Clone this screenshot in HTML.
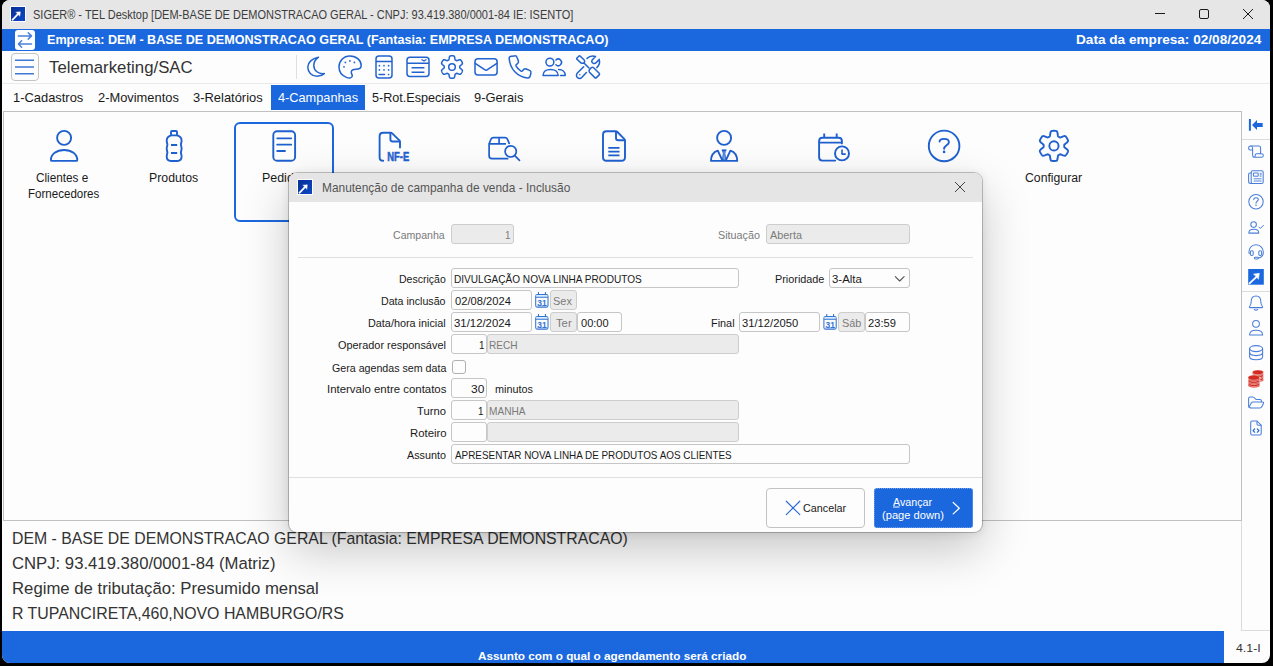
<!DOCTYPE html>
<html><head><meta charset="utf-8">
<style>
*{box-sizing:border-box;margin:0;padding:0}
html,body{width:1273px;height:666px;overflow:hidden;background:#000;font-family:"Liberation Sans",sans-serif;}
#frame{position:absolute;left:2px;top:0;width:1268px;height:663px;background:#fdfdfd;border-radius:8px;overflow:hidden}
#win{position:absolute;left:-2px;top:0;width:1273px;height:666px}
.abs{position:absolute}
.t{position:absolute;white-space:nowrap;line-height:1;transform-origin:0 0}
svg{position:absolute;overflow:visible}
#titlebar{left:0;top:0;width:1273px;height:29px;background:#e6e6e6}
#bluebar{left:0;top:29px;width:1273px;height:22px;background:#1b68de}
#sep1{left:0;top:83px;width:1273px;height:1px;background:#eaeaea}
#content{left:3px;top:111px;width:1239px;height:410px;border:1px solid #c0c0c0;background:#fdfdfd}
#sideline{left:1242px;top:139px;width:28px;height:1px;background:#dcdcdc}
#sideline2{left:1242px;top:630px;width:28px;height:1px;background:#dcdcdc}
#sidev{left:1241px;top:521px;width:1px;height:110px;background:#dcdcdc}
#status{left:0;top:631px;width:1224px;height:35px;background:#1b68de}
#tabsel{left:271px;top:85px;width:94px;height:25px;background:#1b68de}
#swapbox{left:15px;top:30px;width:20px;height:20px;background:#fff;border-radius:3px}
#hamb{left:11px;top:53px;width:28px;height:28px;border:1px solid #c4c4c4;border-radius:4px;background:#fdfdfd}
#tsep{left:296px;top:55px;width:1px;height:24px;background:#e0e0e0}
#selbox{left:234px;top:122px;width:100px;height:100px;border:2px solid #1b68de;border-radius:6px}
</style></head><body>
<div id="frame"><div id="win">
<div id="titlebar" class="abs"></div>
<div id="bluebar" class="abs"></div>
<div id="sep1" class="abs"></div>
<div id="content" class="abs"></div>
<div id="sideline" class="abs"></div><div id="sideline2" class="abs"></div><div id="sidev" class="abs"></div>
<div id="status" class="abs"></div>
<div id="tabsel" class="abs"></div>
<div id="swapbox" class="abs"></div>
<div id="hamb" class="abs"></div>
<div id="tsep" class="abs"></div>
<div id="selbox" class="abs"></div>
<span class="t" style="left:33.29px;top:9.42px;font-size:12.5px;color:#3c3c3c;transform:scaleX(0.8796)">SIGER® - TEL Desktop [DEM-BASE DE DEMONSTRACAO GERAL - CNPJ: 93.419.380/0001-84 IE: ISENTO]</span>
<span class="t" style="left:47.45px;top:33.44px;font-size:13.3px;color:#fff;transform:scaleX(0.9476);font-weight:700">Empresa: DEM - BASE DE DEMONSTRACAO GERAL (Fantasia: EMPRESA DEMONSTRACAO)</span>
<span class="t" style="left:1076.40px;top:33.44px;font-size:13.3px;color:#fff;transform:scaleX(1.0230);font-weight:700">Data da empresa: 02/08/2024</span>
<span class="t" style="left:48.96px;top:58.80px;font-size:16.3px;color:#333;transform:scaleX(1.0307)">Telemarketing/SAC</span>
<span class="t" style="left:12.57px;top:90.80px;font-size:13px;color:#1a1a1a;transform:scaleX(0.9923)">1-Cadastros</span>
<span class="t" style="left:98.13px;top:90.80px;font-size:13px;color:#1a1a1a;transform:scaleX(0.9900)">2-Movimentos</span>
<span class="t" style="left:192.93px;top:90.80px;font-size:13px;color:#1a1a1a;transform:scaleX(0.9943)">3-Relatórios</span>
<span class="t" style="left:278.02px;top:90.80px;font-size:13px;color:#fff;transform:scaleX(0.9802)">4-Campanhas</span>
<span class="t" style="left:371.77px;top:90.80px;font-size:13px;color:#1a1a1a;transform:scaleX(0.9697)">5-Rot.Especiais</span>
<span class="t" style="left:473.91px;top:90.80px;font-size:13px;color:#1a1a1a;transform:scaleX(0.9895)">9-Gerais</span>
<span class="t" style="left:35.75px;top:171.84px;font-size:12px;color:#1a1a1a;transform:scaleX(0.9796)">Clientes e</span>
<span class="t" style="left:28.24px;top:187.84px;font-size:12px;color:#1a1a1a;transform:scaleX(0.9628)">Fornecedores</span>
<span class="t" style="left:148.82px;top:171.84px;font-size:12px;color:#1a1a1a;transform:scaleX(1.0243)">Produtos</span>
<span class="t" style="left:262.21px;top:171.84px;font-size:12px;color:#1a1a1a;transform:scaleX(1.0360)">Pedidos</span>
<span class="t" style="left:1025.15px;top:171.84px;font-size:12px;color:#1a1a1a;transform:scaleX(1.0198)">Configurar</span>
<span class="t" style="left:11.85px;top:530.20px;font-size:16.3px;color:#333;transform:scaleX(0.9720)">DEM - BASE DE DEMONSTRACAO GERAL (Fantasia: EMPRESA DEMONSTRACAO)</span>
<span class="t" style="left:12.26px;top:555.20px;font-size:16.3px;color:#333;transform:scaleX(1.0253)">CNPJ: 93.419.380/0001-84 (Matriz)</span>
<span class="t" style="left:11.77px;top:580.20px;font-size:16.3px;color:#333;transform:scaleX(1.0274)">Regime de tributação: Presumido mensal</span>
<span class="t" style="left:11.85px;top:605.20px;font-size:16.3px;color:#333;transform:scaleX(0.9758)">R TUPANCIRETA,460,NOVO HAMBURGO/RS</span>
<span class="t" style="left:477.89px;top:650.52px;font-size:11.2px;color:#fff;transform:scaleX(1.0503);font-weight:700">Assunto com o qual o agendamento será criado</span>
<span class="t" style="left:1236.12px;top:642.69px;font-size:11px;color:#333;transform:scaleX(1.1209)">4.1-I</span>
<svg width="1273" height="666" viewBox="0 0 1273 666" style="left:0;top:0" fill="none" stroke-linecap="round" stroke-linejoin="round">
<defs><linearGradient id="ag" x1="0" y1="0" x2="1" y2="1"><stop offset="0" stop-color="#092f95"/><stop offset="1" stop-color="#0c49c6"/></linearGradient></defs><rect x="10" y="6" width="16" height="16" fill="#fff"/><rect x="11" y="7" width="14" height="14" fill="url(#ag)"/>
<path d="M12 20.3 L18.6 13.4" stroke="#fff" stroke-width="1.7" stroke-linecap="butt"/><path d="M16.2 12.2 L20.3 11.8 L19.9 15.9Z" fill="#fff" stroke="#fff" stroke-width="0.5"/>
<g stroke="#1a1a1a" stroke-width="1" stroke-linecap="butt"><path d="M1155 13.5 H1165"/><rect x="1199.5" y="9.5" width="9" height="9" rx="1.5"/><path d="M1243 9 L1253 19 M1253 9 L1243 19"/></g>
<g stroke="#4b80dc" stroke-width="1.5"><path d="M18.3 35.9 H31.3 M28.2 32.7 L31.5 35.9 L28.2 39.1"/><path d="M31.5 44 H18.6 M21.6 40.8 L18.4 44 L21.6 47.2"/></g>
<g stroke="#3f79d8" stroke-width="1.5" stroke-linecap="butt"><path d="M15 60.3 H34 M15 67 H34 M15 73.8 H34"/></g>
<g stroke="#2263cf" stroke-width="1.5">
<path d="M318.5 57.2 C312 58.5 307.8 62.5 307.8 67 C307.8 72.5 312 76.3 317 76.3 C320 76.3 322.8 75 324.3 73.6 C318.5 74.5 313.8 70.5 313.8 65.5 C313.8 62 316 59 318.5 57.2Z"/>
<path d="M350 56 C343.5 56 339 61 339 67 C339 72 342.5 76 347 77.6 C349.5 78.5 352 78 352.3 76 C352.5 74.5 351 73.5 351.3 71.8 C351.6 70 353.5 69.3 356 69.3 C359 69.3 361.2 68.5 361.2 65.5 C361.2 60.5 356.5 56 350 56Z"/>
<circle cx="344" cy="66.8" r="0.9" fill="#2263cf" stroke="none"/>
<circle cx="345.4" cy="62.4" r="0.9" fill="#2263cf" stroke="none"/>
<circle cx="349.9" cy="60.9" r="0.9" fill="#2263cf" stroke="none"/>
<circle cx="354.4" cy="62.4" r="0.9" fill="#2263cf" stroke="none"/>
<rect x="376" y="56" width="16" height="22" rx="3"/><path d="M376 61.5 H392" stroke-linecap="butt"/>
<circle cx="379.4" cy="65.7" r="0.85" fill="#2263cf" stroke="none"/>
<circle cx="384" cy="65.7" r="0.85" fill="#2263cf" stroke="none"/>
<circle cx="388.6" cy="65.7" r="0.85" fill="#2263cf" stroke="none"/>
<circle cx="379.4" cy="69.9" r="0.85" fill="#2263cf" stroke="none"/>
<circle cx="384" cy="69.9" r="0.85" fill="#2263cf" stroke="none"/>
<circle cx="388.6" cy="69.9" r="0.85" fill="#2263cf" stroke="none"/>
<path d="M379 74.5 H384.6" stroke-width="1.3"/><circle cx="388.6" cy="74.5" r="0.85" fill="#2263cf" stroke="none"/>
<rect x="407" y="57.3" width="22" height="19.1" rx="3"/><path d="M407 63.2 H429 M411.6 67.8 H424.4 M411.6 72.3 H424.4" stroke-linecap="butt"/><path d="M422 59.7 L424 61 L426 59.7" stroke-width="1.2"/>
<path d="M459.80 67.00 L459.80 66.73 L459.78 66.46 L459.79 66.18 L460.01 65.87 L460.43 65.51 L460.97 65.09 L461.54 64.62 L462.04 64.12 L462.38 63.63 L462.49 63.18 L462.38 62.80 L462.23 62.44 L462.07 62.09 L461.89 61.74 L461.70 61.40 L461.50 61.06 L461.29 60.74 L461.06 60.42 L460.83 60.10 L460.55 59.82 L460.11 59.70 L459.51 59.74 L458.83 59.93 L458.13 60.19 L457.50 60.45 L456.98 60.63 L456.60 60.66 L456.36 60.53 L456.13 60.39 L455.90 60.25 L455.66 60.11 L455.42 59.99 L455.19 59.84 L455.03 59.50 L454.93 58.96 L454.83 58.28 L454.71 57.55 L454.53 56.87 L454.27 56.32 L453.94 56.00 L453.56 55.91 L453.17 55.86 L452.78 55.83 L452.39 55.81 L452.00 55.80 L451.61 55.81 L451.22 55.83 L450.83 55.86 L450.44 55.91 L450.06 56.00 L449.73 56.32 L449.47 56.87 L449.29 57.55 L449.17 58.28 L449.07 58.96 L448.97 59.50 L448.81 59.84 L448.58 59.99 L448.34 60.11 L448.10 60.25 L447.87 60.39 L447.64 60.53 L447.40 60.66 L447.02 60.63 L446.50 60.45 L445.87 60.19 L445.17 59.93 L444.49 59.74 L443.89 59.70 L443.45 59.82 L443.17 60.10 L442.94 60.42 L442.71 60.74 L442.50 61.06 L442.30 61.40 L442.11 61.74 L441.93 62.09 L441.77 62.44 L441.62 62.80 L441.51 63.18 L441.62 63.63 L441.96 64.12 L442.46 64.62 L443.03 65.09 L443.57 65.51 L443.99 65.87 L444.21 66.18 L444.22 66.46 L444.20 66.73 L444.20 67.00 L444.20 67.27 L444.22 67.54 L444.21 67.82 L443.99 68.13 L443.57 68.49 L443.03 68.91 L442.46 69.38 L441.96 69.88 L441.62 70.37 L441.51 70.82 L441.62 71.20 L441.77 71.56 L441.93 71.91 L442.11 72.26 L442.30 72.60 L442.50 72.94 L442.71 73.26 L442.94 73.58 L443.17 73.90 L443.45 74.18 L443.89 74.30 L444.49 74.26 L445.17 74.07 L445.87 73.81 L446.50 73.55 L447.02 73.37 L447.40 73.34 L447.64 73.47 L447.87 73.61 L448.10 73.75 L448.34 73.89 L448.58 74.01 L448.81 74.16 L448.97 74.50 L449.07 75.04 L449.17 75.72 L449.29 76.45 L449.47 77.13 L449.73 77.68 L450.06 78.00 L450.44 78.09 L450.83 78.14 L451.22 78.17 L451.61 78.19 L452.00 78.20 L452.39 78.19 L452.78 78.17 L453.17 78.14 L453.56 78.09 L453.94 78.00 L454.27 77.68 L454.53 77.13 L454.71 76.45 L454.83 75.72 L454.93 75.04 L455.03 74.50 L455.19 74.16 L455.42 74.01 L455.66 73.89 L455.90 73.75 L456.13 73.61 L456.36 73.47 L456.60 73.34 L456.98 73.37 L457.50 73.55 L458.13 73.81 L458.83 74.07 L459.51 74.26 L460.11 74.30 L460.55 74.18 L460.83 73.90 L461.06 73.58 L461.29 73.26 L461.50 72.94 L461.70 72.60 L461.89 72.26 L462.07 71.91 L462.23 71.56 L462.38 71.20 L462.49 70.82 L462.38 70.37 L462.04 69.88 L461.54 69.38 L460.97 68.91 L460.43 68.49 L460.01 68.13 L459.79 67.82 L459.78 67.54 L459.80 67.27Z"/><circle cx="452" cy="67" r="3.3"/>
<rect x="475" y="58.8" width="22.1" height="16.2" rx="3"/><path d="M475.2 63.3 L485 69.9 Q486 70.6 487 69.9 L496.9 63.3"/>
<path d="M509.2 58.5 C509 57 510 56.5 511.5 56.3 L514.5 55.9 C516 55.7 516.8 56.5 517.2 57.8 L518.4 61 C518.8 62.2 518.3 63 517.5 63.7 L516.3 64.6 C515.8 65 515.8 65.6 516.1 66.2 C517.2 68.2 519 70 521 71.1 C521.6 71.4 522.2 71.3 522.6 70.8 L523.6 69.6 C524.3 68.8 525.2 68.6 526.2 69 L529.6 70.4 C530.8 70.9 531.2 71.8 530.9 73 L530.2 76 C529.8 77.5 528.8 78.1 527.3 77.9 C517.5 76.8 509.9 69 509.2 58.5Z"/>
<circle cx="549.9" cy="62.1" r="3.95"/><path d="M543 75.5 C543 71.5 546.5 69.4 550.5 69.4 C554.5 69.4 558.2 71.5 558.2 75.5Z"/>
<path d="M555.9 60 A3.3 3.3 0 1 1 555.9 64.8"/><path d="M558.6 69.5 C562.5 69.5 565.2 71.8 565.2 75.5 H560.5"/>
<path d="M577 58 L578.8 56.2 Q579.5 55.5 580.3 56.2 L584 59.8 Q584.6 60.4 584.6 61.2 L584.3 63.2 L582 63.2 Q581.2 63.2 580.6 62.6 L577 59.3 Q576.3 58.7 577 58Z"/>
<path d="M584 63 L589 68"/>
<path d="M589.3 70 Q588.6 71.2 589.5 72.2 L594.8 77.6 Q595.6 78.4 596.4 77.6 L599.2 74.9 Q600 74.1 599.2 73.3 L593.6 67.8 Q592.6 66.9 591.4 67.6Z"/>
<path d="M583.7 66.7 L577.6 72.8 C576 74.5 576.2 76.5 577.5 77.6 C578.8 78.7 580.8 78.5 582 77.2 L586.4 72.5"/>
<circle cx="579.8" cy="74.8" r="0.7" fill="#2263cf" stroke="none"/>
<path d="M587 58.4 C589 56.5 592.5 55.6 595.5 56.5 L592.2 60 C591.3 61.2 591.8 62.6 593 63.2 C594.3 63.8 595.5 63.3 596.3 62.4 L599.2 59.4 C600 62.3 599.2 65.5 596.8 67.6"/>
</g>
<g stroke="#1f60cf" stroke-width="1.9">
<circle cx="64.1" cy="137.9" r="7"/><path d="M51.8 160.9 Q50.9 160.9 50.9 160 C51 154 56.5 150 64.1 150 C71.7 150 77.2 154 77.3 160 Q77.3 160.9 76.4 160.9Z"/>
<path d="M171 135.3 V132 Q171 131 172 131 H176 Q177 131 177 132 V135.3"/>
<path d="M171 135.4 C168.5 136.2 166.7 138 166.7 140.6 C166.7 142.6 167.4 143.4 167.4 144.6 C167.4 145.8 166.7 146.6 166.7 148.6 C166.7 150.6 167.4 151.4 167.4 152.6 C167.4 153.8 166.7 154.6 166.7 156.6 C166.7 159.5 168.5 161 171 161 H177.3 C179.8 161 181.6 159.5 181.6 156.6 C181.6 154.6 180.9 153.8 180.9 152.6 C180.9 151.4 181.6 150.6 181.6 148.6 C181.6 146.6 180.9 145.8 180.9 144.6 C180.9 143.4 181.6 142.6 181.6 140.6 C181.6 138 179.8 136.2 177.3 135.4Z"/>
<path d="M171 145 H177.2 M171 153 H177.2" stroke-linecap="butt" stroke-width="2"/>
<rect x="273.3" y="131.2" width="21.8" height="29.5" rx="3.8"/><path d="M277.2 138.3 H291.2 M277.2 144.7 H291.2 M277.2 151 H285" stroke-width="1.8"/>
<path d="M383.2 160.8 Q379.6 160.8 379.6 157.2 V136.2 Q379.6 132.7 383.2 132.7 H390.5 Q391.5 132.7 392.2 133.4 L399.4 140.4 Q400 141 400 142 V147.6"/><path d="M390.4 133.2 V139.3 Q390.4 141.5 392.6 141.5 H399.6"/>
<text x="387.2" y="161.4" font-family="Liberation Sans" font-weight="700" font-size="12.3" fill="#1f60cf" stroke="#1f60cf" stroke-width="0.5" textLength="22" lengthAdjust="spacingAndGlyphs">NF-E</text>
</g>
<g stroke="#1f60cf" stroke-width="1.7">
<path d="M507.6 158.7 H492 Q489.1 158.7 489.1 155.8 V143.8 L490.9 139.3 Q491.6 137.7 493.4 137.7 H505 Q506.8 137.7 507.5 139.3 L509.2 143.3"/><path d="M489.3 143.8 H506 M499.1 137.8 V143.6" stroke-linecap="butt"/>
<circle cx="510.7" cy="151.4" r="5.6"/><path d="M514.8 155.6 L519.5 160.3"/>
</g>
<g stroke="#1f60cf" stroke-width="1.9">
<path d="M606.5 131.2 H615.5 Q616.6 131.2 617.4 132 L624.2 138.8 Q625 139.6 625 140.7 V157.2 Q625 160.7 621.5 160.7 H606.5 Q603 160.7 603 157.2 V134.7 Q603 131.2 606.5 131.2Z"/><path d="M616 131.6 V138 Q616 140.3 618.3 140.3 H624.6"/><path d="M608.3 147.8 H619.5 M608.3 151.6 H619.5 M608.3 155.4 H619.5" stroke-width="1.7" stroke-linecap="butt"/>
<circle cx="724.1" cy="137.9" r="7"/>
<path d="M711 160.9 C711 155.5 713.5 152 717.8 150.6 L722.6 160.9Z M737.2 160.9 C737.2 155.5 734.7 152 730.4 150.6 L725.6 160.9Z M711 160.9 H737.2"/>
<path d="M721.8 150.2 H726.4" stroke-width="1.6" stroke-linecap="butt"/><path d="M722.9 151.2 L725.3 151.2 L724.9 153.6 L725.6 158.8 L724.1 160.2 L722.6 158.8 L723.3 153.6Z" fill="#1f60cf" fill-opacity="0.55" stroke-width="0.9"/>
<path d="M835.2 160.6 H822.4 Q819.1 160.6 819.1 157.3 V141.1 Q819.1 137.8 822.4 137.8 H838.6 Q841.9 137.8 841.9 141.1 V143.4"/><path d="M819.3 142.6 H841.7 M824.2 133.6 V137.2 M836.7 133.6 V137.2" stroke-linecap="butt"/>
<circle cx="842" cy="153.4" r="7"/><path d="M842 150 V154.1 H845.2" stroke-width="1.6"/>
<circle cx="944.1" cy="145.9" r="15.3"/><path d="M939.6 141.5 C939.6 139.6 941.5 138.9 944.1 138.9 C947 138.9 948.9 140.3 948.9 142.2 C948.9 145.2 944.1 145.5 944.1 148.8"/>
<circle cx="944.1" cy="151.9" r="1.3" fill="#1f60cf" stroke="none"/>
<path d="M1064.25 145.90 L1064.24 145.54 L1064.22 145.18 L1064.24 144.82 L1064.55 144.41 L1065.14 143.93 L1065.91 143.36 L1066.73 142.71 L1067.44 142.03 L1067.93 141.36 L1068.10 140.75 L1067.95 140.24 L1067.74 139.76 L1067.52 139.28 L1067.28 138.81 L1067.03 138.35 L1066.76 137.90 L1066.47 137.46 L1066.17 137.02 L1065.85 136.60 L1065.48 136.22 L1064.87 136.07 L1064.04 136.15 L1063.10 136.43 L1062.13 136.81 L1061.26 137.19 L1060.54 137.46 L1060.03 137.53 L1059.71 137.36 L1059.41 137.17 L1059.10 136.98 L1058.79 136.81 L1058.47 136.64 L1058.16 136.45 L1057.96 135.97 L1057.84 135.22 L1057.73 134.27 L1057.58 133.24 L1057.34 132.28 L1057.01 131.53 L1056.56 131.07 L1056.05 130.95 L1055.53 130.88 L1055.00 130.84 L1054.48 130.81 L1053.95 130.80 L1053.42 130.81 L1052.90 130.84 L1052.37 130.88 L1051.85 130.95 L1051.34 131.07 L1050.89 131.53 L1050.56 132.28 L1050.32 133.24 L1050.17 134.27 L1050.06 135.22 L1049.94 135.97 L1049.74 136.45 L1049.43 136.64 L1049.11 136.81 L1048.80 136.98 L1048.49 137.17 L1048.19 137.36 L1047.87 137.53 L1047.36 137.46 L1046.64 137.19 L1045.77 136.81 L1044.80 136.43 L1043.86 136.15 L1043.03 136.07 L1042.42 136.22 L1042.05 136.60 L1041.73 137.02 L1041.43 137.46 L1041.14 137.90 L1040.87 138.35 L1040.62 138.81 L1040.38 139.28 L1040.16 139.76 L1039.95 140.24 L1039.80 140.75 L1039.97 141.36 L1040.46 142.03 L1041.17 142.71 L1041.99 143.36 L1042.76 143.93 L1043.35 144.41 L1043.66 144.82 L1043.68 145.18 L1043.66 145.54 L1043.65 145.90 L1043.66 146.26 L1043.68 146.62 L1043.66 146.98 L1043.35 147.39 L1042.76 147.87 L1041.99 148.44 L1041.17 149.09 L1040.46 149.77 L1039.97 150.44 L1039.80 151.05 L1039.95 151.56 L1040.16 152.04 L1040.38 152.52 L1040.62 152.99 L1040.87 153.45 L1041.14 153.90 L1041.43 154.34 L1041.73 154.78 L1042.05 155.20 L1042.42 155.58 L1043.03 155.73 L1043.86 155.65 L1044.80 155.37 L1045.77 154.99 L1046.64 154.61 L1047.36 154.34 L1047.87 154.27 L1048.19 154.44 L1048.49 154.63 L1048.80 154.82 L1049.11 154.99 L1049.43 155.16 L1049.74 155.35 L1049.94 155.83 L1050.06 156.58 L1050.17 157.53 L1050.32 158.56 L1050.56 159.52 L1050.89 160.27 L1051.34 160.73 L1051.85 160.85 L1052.37 160.92 L1052.90 160.96 L1053.42 160.99 L1053.95 161.00 L1054.48 160.99 L1055.00 160.96 L1055.53 160.92 L1056.05 160.85 L1056.56 160.73 L1057.01 160.27 L1057.34 159.52 L1057.58 158.56 L1057.73 157.53 L1057.84 156.58 L1057.96 155.83 L1058.16 155.35 L1058.47 155.16 L1058.79 154.99 L1059.10 154.82 L1059.41 154.63 L1059.71 154.44 L1060.03 154.27 L1060.54 154.34 L1061.26 154.61 L1062.13 154.99 L1063.10 155.37 L1064.04 155.65 L1064.87 155.73 L1065.48 155.58 L1065.85 155.20 L1066.17 154.78 L1066.47 154.34 L1066.76 153.90 L1067.03 153.45 L1067.28 152.99 L1067.52 152.52 L1067.74 152.04 L1067.95 151.56 L1068.10 151.05 L1067.93 150.44 L1067.44 149.77 L1066.73 149.09 L1065.91 148.44 L1065.14 147.87 L1064.55 147.39 L1064.24 146.98 L1064.22 146.62 L1064.24 146.26Z"/><circle cx="1053.95" cy="145.9" r="4.6"/>
</g>
</svg>
<div class="abs" style="left:1242px;top:291px;width:28px;height:1px;background:#dcdcdc"></div>
<svg width="1273" height="666" viewBox="0 0 1273 666" style="left:0;top:0" fill="none" stroke-linecap="round" stroke-linejoin="round">
<path d="M1249.9 119 V130.8" stroke="#1b68de" stroke-width="2" stroke-linecap="butt"/><path d="M1252 125 L1257 120 V123 H1262.7 V127 H1257 V130Z" fill="#1b68de"/>
<g stroke="#4a7ed8" stroke-width="1.05">
<path d="M1252.6 150 H1250.3 Q1248.6 150 1248.6 148 Q1248.6 146 1250.6 146 H1258.6 Q1260.6 146 1260.6 148 V153.6"/>
<path d="M1250.8 146 Q1252.6 146.3 1252.6 148.5 V155.2 Q1252.6 157.2 1254.4 157.2 H1261.5 Q1263.3 157.2 1263.3 155.5 Q1263.3 153.8 1261.5 153.8 H1256.7 Q1255.2 153.8 1255.2 155.5 Q1255.2 157.2 1253.8 157.2"/>
<rect x="1251.2" y="170.8" width="12" height="12.6" rx="1.5"/><path d="M1251.2 173 H1250 Q1248.6 173 1248.6 174.4 V181.4 Q1248.6 183.4 1250.6 183.4 H1253"/>
<rect x="1253.8" y="173" width="4.4" height="3.2" stroke-width="1"/><path d="M1259.8 173.3 H1261.6 M1259.8 174.8 H1261.6 M1259.8 176.2 H1261.6 M1253.6 178.8 H1261.6 M1253.6 181 H1261.6" stroke-width="0.9" stroke-linecap="butt"/>
<circle cx="1256" cy="201.7" r="7.2"/><path d="M1253.8 199.6 C1253.8 198.4 1254.8 197.8 1256 197.8 C1257.4 197.8 1258.3 198.5 1258.3 199.6 C1258.3 201.2 1256 201.3 1256 203.2"/>
<circle cx="1256" cy="205.2" r="0.8" fill="#4a7ed8" stroke="none"/>
<circle cx="1253.6" cy="224.6" r="2.8"/><path d="M1248.8 233.1 C1248.8 230.5 1250.8 229.3 1253.8 229.3 C1256.8 229.3 1258.8 230.5 1258.8 233.1Z"/><path d="M1259 227.2 L1260.3 228.3 L1263.4 225.6" stroke-width="1"/>
<path d="M1249.2 253.6 C1248.2 248.5 1251.5 244.8 1256 244.8 C1260.5 244.8 1264 248.5 1263.2 253.6 C1262.8 256 1261 257.6 1258.6 258"/>
<rect x="1250.4" y="250.8" width="2.8" height="4.6" rx="1.2"/><rect x="1258.8" y="250.8" width="2.8" height="4.6" rx="1.2"/><rect x="1254.4" y="257.2" width="4" height="1.7" rx="0.85"/>
</g>
<rect x="1248.2" y="269" width="15.6" height="15.7" fill="#1b68de"/><path d="M1249 283.8 L1257 276.4" stroke="#fff" stroke-width="1.8" stroke-linecap="butt"/><path d="M1253.8 274 L1259.4 273.3 L1258.5 279Z" fill="#fff" stroke="#fff" stroke-width="0.5"/>
<g stroke="#4a7ed8" stroke-width="1.05">
<path d="M1249.8 307.6 C1249.3 307.6 1249.2 307 1249.6 306.5 C1250.8 305 1251.2 303.8 1251.2 301.4 C1251.2 298 1253 295.9 1256 295.9 C1259 295.9 1260.8 298 1260.8 301.4 C1260.8 303.8 1261.2 305 1262.4 306.5 C1262.8 307 1262.7 307.6 1262.2 307.6Z"/><path d="M1254.3 309.4 Q1256 311.2 1257.7 309.4"/>
<circle cx="1256" cy="323.8" r="3.4"/><path d="M1249.6 335 C1249.6 331.8 1252.2 330.3 1256 330.3 C1259.8 330.3 1262.6 331.8 1262.6 335Z"/>
<ellipse cx="1256.1" cy="348.6" rx="6.5" ry="3"/><path d="M1249.6 348.6 V356.8 C1249.6 358.6 1252.5 359.8 1256.1 359.8 C1259.7 359.8 1262.6 358.6 1262.6 356.8 V348.6"/><path d="M1249.6 352.6 C1249.6 354.4 1252.5 355.6 1256.1 355.6 C1259.7 355.6 1262.6 354.4 1262.6 352.6"/>
</g>
<ellipse cx="1258" cy="379.9" rx="5.6" ry="2.4" fill="#d3291f" stroke="#fdfdfd" stroke-width="0.45"/><ellipse cx="1258" cy="378.7" rx="5.6" ry="2.4" fill="#d3291f" stroke="#fdfdfd" stroke-width="0.45"/><ellipse cx="1258" cy="376.7" rx="5.6" ry="2.4" fill="#d3291f" stroke="#fdfdfd" stroke-width="0.45"/><ellipse cx="1258" cy="375.5" rx="5.6" ry="2.4" fill="#d3291f" stroke="#fdfdfd" stroke-width="0.45"/><ellipse cx="1258" cy="373.5" rx="5.6" ry="2.4" fill="#d3291f" stroke="#fdfdfd" stroke-width="0.45"/><ellipse cx="1258" cy="372.3" rx="5.6" ry="2.4" fill="#d3291f" stroke="#fdfdfd" stroke-width="0.45"/>
<ellipse cx="1254" cy="385.2" rx="6" ry="2.6" fill="#d3291f" stroke="#fdfdfd" stroke-width="0.45"/><ellipse cx="1254" cy="384.0" rx="6" ry="2.6" fill="#d3291f" stroke="#fdfdfd" stroke-width="0.45"/><ellipse cx="1254" cy="382.0" rx="6" ry="2.6" fill="#d3291f" stroke="#fdfdfd" stroke-width="0.45"/><ellipse cx="1254" cy="380.8" rx="6" ry="2.6" fill="#d3291f" stroke="#fdfdfd" stroke-width="0.45"/><ellipse cx="1254" cy="378.8" rx="6" ry="2.6" fill="#d3291f" stroke="#fdfdfd" stroke-width="0.45"/><ellipse cx="1254" cy="377.6" rx="6" ry="2.6" fill="#d3291f" stroke="#fdfdfd" stroke-width="0.45"/>
<g stroke="#4a7ed8" stroke-width="1.05">
<path d="M1250.4 407.8 Q1248.6 407.8 1248.6 406 V398.6 Q1248.6 396.9 1250.3 396.9 H1252.6 Q1253.4 396.9 1254 397.5 L1255.3 398.8 Q1255.9 399.4 1256.7 399.4 H1259.8 Q1261.5 399.4 1261.5 401.1 V401.8"/>
<path d="M1249 407 L1251.3 402.9 Q1251.9 401.9 1253.1 401.9 H1262.2 Q1264.2 401.9 1263.3 403.7 L1261.8 406.7 Q1261.2 407.9 1259.9 407.9 H1250.4"/>
<path d="M1252.2 421 H1257 L1261.2 425.2 V433.4 Q1261.2 434.9 1259.7 434.9 H1252.2 Q1250.7 434.9 1250.7 433.4 V422.5 Q1250.7 421 1252.2 421Z"/><path d="M1257 421.2 V424 Q1257 425.2 1258.2 425.2 H1261"/><path d="M1254.6 429 L1253.1 430.6 L1254.6 432.2 M1257.4 429 L1258.9 430.6 L1257.4 432.2" stroke-width="1.25" stroke="#2f6cd0"/>
</g></svg>
<style>
#dlg{left:289px;top:173px;width:693px;height:359px;background:#fdfdfd;border-radius:8px;box-shadow:0 0 0 1px rgba(0,0,0,.22),0 18px 48px rgba(0,0,0,.22),0 1px 10px rgba(0,0,0,.10)}
#dclip{position:absolute;left:0;top:0;width:693px;height:359px;border-radius:8px;overflow:hidden}
#din{position:absolute;left:-289px;top:-173px;width:1273px;height:666px}
#dtitle{left:289px;top:173px;width:693px;height:29px;background:#e5e5e5}
.f{position:absolute;border:1px solid #c6c6c6;border-radius:3px;background:#fdfdfd}
.g{background:#ebebeb;border-color:#cdcdcd}
.hl{position:absolute;height:1px;background:#e0e0e0}
</style>
<div id="dlg" class="abs"><div id="dclip"><div id="din">
<div id="dtitle" class="abs"></div>
<div class="hl" style="left:298px;top:257px;width:675px"></div>
<div class="hl" style="left:289px;top:477px;width:693px"></div>
<div class="f g" style="left:451px;top:224px;width:63px;height:20px"></div>
<div class="f g" style="left:766px;top:224px;width:144px;height:20px"></div>
<div class="f" style="left:451px;top:268px;width:288px;height:20px"></div>
<div class="f" style="left:829px;top:268px;width:81px;height:20px"></div>
<div class="f" style="left:451px;top:290px;width:81px;height:20px"></div>
<div class="f g" style="left:550px;top:290px;width:27px;height:20px"></div>
<div class="f" style="left:451px;top:312px;width:81px;height:20px"></div>
<div class="f g" style="left:550px;top:312px;width:27px;height:20px"></div>
<div class="f" style="left:577px;top:312px;width:45px;height:20px"></div>
<div class="f" style="left:739px;top:312px;width:81px;height:20px"></div>
<div class="f g" style="left:838px;top:312px;width:27px;height:20px"></div>
<div class="f" style="left:865px;top:312px;width:45px;height:20px"></div>
<div class="f" style="left:451px;top:334px;width:36px;height:20px"></div>
<div class="f g" style="left:487px;top:334px;width:252px;height:20px"></div>
<div class="f" style="left:452px;top:360px;width:14px;height:14px;border-color:#b0b0b0"></div>
<div class="f" style="left:451px;top:378px;width:36px;height:20px"></div>
<div class="f" style="left:451px;top:400px;width:36px;height:20px"></div>
<div class="f g" style="left:487px;top:400px;width:252px;height:20px"></div>
<div class="f" style="left:451px;top:422px;width:36px;height:20px"></div>
<div class="f g" style="left:487px;top:422px;width:252px;height:20px"></div>
<div class="f" style="left:451px;top:444px;width:459px;height:20px"></div>
<div class="f" style="left:766px;top:488px;width:99px;height:40px;border-color:#c2c2c2;border-radius:4px"></div>
<div class="f" style="left:874px;top:488px;width:99px;height:40px;background:#1b68de;border:1px dotted rgba(255,255,255,.4);border-radius:3px"></div>
<span class="t" style="left:321.59px;top:182.23px;font-size:12.6px;color:#555;transform:scaleX(0.9458)">Manutenção de campanha de venda - Inclusão</span>
<span class="t" style="left:393.29px;top:229.72px;font-size:11.2px;color:#7a7a7a;transform:scaleX(0.9457)">Campanha</span>
<span class="t" style="left:505.06px;top:229.72px;font-size:11.2px;color:#7a7a7a;transform:scaleX(0.8808)">1</span>
<span class="t" style="left:718.27px;top:229.72px;font-size:11.2px;color:#7a7a7a;transform:scaleX(0.9633)">Situação</span>
<span class="t" style="left:769.75px;top:229.72px;font-size:11.2px;color:#7a7a7a;transform:scaleX(0.9702)">Aberta</span>
<span class="t" style="left:399.45px;top:273.92px;font-size:11.2px;color:#1a1a1a;transform:scaleX(0.9407)">Descrição</span>
<span class="t" style="left:454.46px;top:273.92px;font-size:11.2px;color:#1a1a1a;transform:scaleX(0.9005)">DIVULGAÇÃO NOVA LINHA PRODUTOS</span>
<span class="t" style="left:774.53px;top:273.92px;font-size:11.2px;color:#1a1a1a;transform:scaleX(0.9687)">Prioridade</span>
<span class="t" style="left:832.27px;top:273.92px;font-size:11.2px;color:#1a1a1a;transform:scaleX(1.0186)">3-Alta</span>
<span class="t" style="left:380.65px;top:295.92px;font-size:11.2px;color:#1a1a1a;transform:scaleX(0.9522)">Data inclusão</span>
<span class="t" style="left:454.84px;top:295.92px;font-size:11.2px;color:#1a1a1a;transform:scaleX(0.9984)">02/08/2024</span>
<span class="t" style="left:553.29px;top:295.92px;font-size:11.2px;color:#7a7a7a;transform:scaleX(0.9808)">Sex</span>
<span class="t" style="left:367.64px;top:317.92px;font-size:11.2px;color:#1a1a1a;transform:scaleX(0.9684)">Data/hora inicial</span>
<span class="t" style="left:454.29px;top:317.92px;font-size:11.2px;color:#1a1a1a;transform:scaleX(1.0162)">31/12/2024</span>
<span class="t" style="left:556.11px;top:317.92px;font-size:11.2px;color:#7a7a7a;transform:scaleX(1.0054)">Ter</span>
<span class="t" style="left:580.64px;top:317.92px;font-size:11.2px;color:#1a1a1a;transform:scaleX(0.9872)">00:00</span>
<span class="t" style="left:710.73px;top:317.92px;font-size:11.2px;color:#1a1a1a;transform:scaleX(0.9714)">Final</span>
<span class="t" style="left:742.46px;top:317.92px;font-size:11.2px;color:#1a1a1a;transform:scaleX(1.0032)">31/12/2050</span>
<span class="t" style="left:841.87px;top:317.92px;font-size:11.2px;color:#7a7a7a;transform:scaleX(0.9724)">Sáb</span>
<span class="t" style="left:868.15px;top:317.92px;font-size:11.2px;color:#1a1a1a;transform:scaleX(0.9969)">23:59</span>
<span class="t" style="left:338.30px;top:339.92px;font-size:11.2px;color:#1a1a1a;transform:scaleX(0.9744)">Operador responsável</span>
<span class="t" style="left:478.66px;top:339.92px;font-size:11.2px;color:#1a1a1a;transform:scaleX(0.8808)">1</span>
<span class="t" style="left:489.37px;top:339.92px;font-size:11.2px;color:#7a7a7a;transform:scaleX(0.9032)">RECH</span>
<span class="t" style="left:331.89px;top:362.52px;font-size:11.2px;color:#1a1a1a;transform:scaleX(0.9527)">Gera agendas sem data</span>
<span class="t" style="left:326.67px;top:383.92px;font-size:11.2px;color:#1a1a1a;transform:scaleX(1.0213)">Intervalo entre contatos</span>
<span class="t" style="left:471.27px;top:383.92px;font-size:11.2px;color:#1a1a1a;transform:scaleX(1.0734)">30</span>
<span class="t" style="left:494.94px;top:383.92px;font-size:11.2px;color:#1a1a1a;transform:scaleX(0.9671)">minutos</span>
<span class="t" style="left:417.18px;top:405.92px;font-size:11.2px;color:#1a1a1a;transform:scaleX(1.0026)">Turno</span>
<span class="t" style="left:478.46px;top:405.92px;font-size:11.2px;color:#1a1a1a;transform:scaleX(0.8808)">1</span>
<span class="t" style="left:489.48px;top:405.92px;font-size:11.2px;color:#7a7a7a;transform:scaleX(0.9068)">MANHA</span>
<span class="t" style="left:409.51px;top:427.92px;font-size:11.2px;color:#1a1a1a;transform:scaleX(1.0168)">Roteiro</span>
<span class="t" style="left:407.15px;top:449.92px;font-size:11.2px;color:#1a1a1a;transform:scaleX(0.9641)">Assunto</span>
<span class="t" style="left:455.12px;top:449.92px;font-size:11.2px;color:#1a1a1a;transform:scaleX(0.8849)">APRESENTAR NOVA LINHA DE PRODUTOS AOS CLIENTES</span>
<span class="t" style="left:802.92px;top:503.42px;font-size:11.2px;color:#1a1a1a;transform:scaleX(0.9640)">Cancelar</span>
<span class="t" style="left:893.15px;top:496.62px;font-size:11.2px;color:#fff;transform:scaleX(0.9546)">Avançar</span>
<span class="t" style="left:882.01px;top:510.32px;font-size:11.2px;color:#fff;transform:scaleX(0.9952)">(page down)</span>
<svg width="1273" height="666" viewBox="0 0 1273 666" style="left:0;top:0" fill="none" stroke-linecap="round" stroke-linejoin="round">
<!--DSVG-->
<rect x="297" y="179" width="16" height="16" fill="#fff"/><rect x="298" y="180" width="14" height="14" fill="url(#ag)"/>
<path d="M299 193.3 L305.6 186.4" stroke="#fff" stroke-width="1.7" stroke-linecap="butt"/><path d="M303.2 185.2 L307.3 184.8 L306.9 188.9Z" fill="#fff" stroke="#fff" stroke-width="0.5"/>
<path d="M955 182 L965 192 M965 182 L955 192" stroke="#444" stroke-width="1" stroke-linecap="butt"/>
<rect x="535.7" y="294.5" width="12.3" height="12.7" rx="1.8" fill="#fdfdfd" stroke="#3473d2" stroke-width="1.05"/><rect x="536.3000000000001" y="295.09999999999997" width="11.1" height="2" fill="#d4ecff"/><path d="M535.7 297.29999999999995 H548.0 M538.5 292.09999999999997 V294.5 M545.4 292.09999999999997 V294.5" stroke="#3473d2" stroke-width="1.05" stroke-linecap="butt"/><text x="537.3000000000001" y="305.59999999999997" font-family="Liberation Sans" font-weight="700" font-size="9.8" fill="#3473d2" textLength="9.4" lengthAdjust="spacingAndGlyphs">31</text><path d="M537.3000000000001 306.0 H546.7" stroke="#3473d2" stroke-width="0.8" stroke-linecap="butt"/>
<rect x="535.7" y="316.5" width="12.3" height="12.7" rx="1.8" fill="#fdfdfd" stroke="#3473d2" stroke-width="1.05"/><rect x="536.3000000000001" y="317.09999999999997" width="11.1" height="2" fill="#d4ecff"/><path d="M535.7 319.29999999999995 H548.0 M538.5 314.09999999999997 V316.5 M545.4 314.09999999999997 V316.5" stroke="#3473d2" stroke-width="1.05" stroke-linecap="butt"/><text x="537.3000000000001" y="327.59999999999997" font-family="Liberation Sans" font-weight="700" font-size="9.8" fill="#3473d2" textLength="9.4" lengthAdjust="spacingAndGlyphs">31</text><path d="M537.3000000000001 328.0 H546.7" stroke="#3473d2" stroke-width="0.8" stroke-linecap="butt"/>
<rect x="823.9" y="316.5" width="12.3" height="12.7" rx="1.8" fill="#fdfdfd" stroke="#3473d2" stroke-width="1.05"/><rect x="824.5" y="317.09999999999997" width="11.1" height="2" fill="#d4ecff"/><path d="M823.9 319.29999999999995 H836.1999999999999 M826.6999999999999 314.09999999999997 V316.5 M833.5999999999999 314.09999999999997 V316.5" stroke="#3473d2" stroke-width="1.05" stroke-linecap="butt"/><text x="825.5" y="327.59999999999997" font-family="Liberation Sans" font-weight="700" font-size="9.8" fill="#3473d2" textLength="9.4" lengthAdjust="spacingAndGlyphs">31</text><path d="M825.5 328.0 H834.9" stroke="#3473d2" stroke-width="0.8" stroke-linecap="butt"/>
<path d="M895.3 276.7 L899.7 281 L904.1 276.7" stroke="#555" stroke-width="1.1"/>
<path d="M786.3 501.2 L799.8 514.6 M799.8 501.2 L786.3 514.6" stroke="#2f6fd0" stroke-width="1.2"/>
<path d="M953.2 502.5 L959.3 508.2 L953.2 513.9" stroke="#fff" stroke-width="1.2"/>
<path d="M893 507 H899.5" stroke="#fff" stroke-width="1" stroke-linecap="butt"/>
</svg>
</div></div></div>

</div></div>
</body></html>
